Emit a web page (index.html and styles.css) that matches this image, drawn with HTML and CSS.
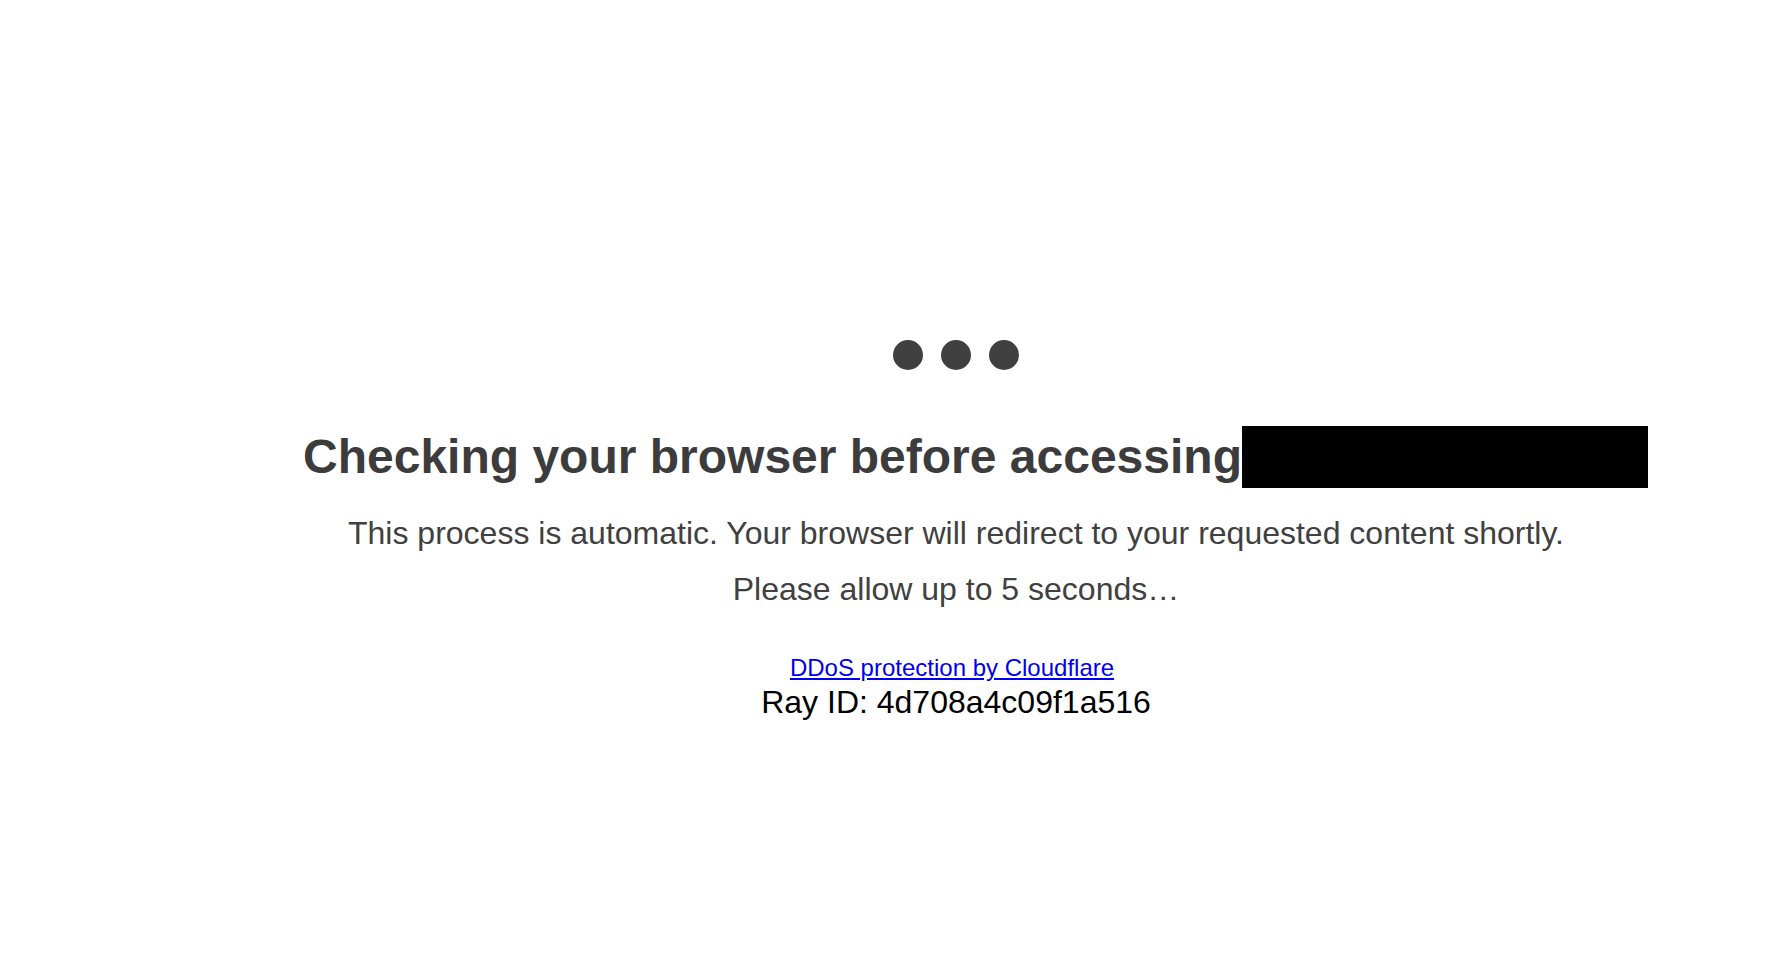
FILE: index.html
```html
<!DOCTYPE html>
<html lang="en">
<head>
  <meta charset="UTF-8" />
  <title>Just a moment...</title>
  <link rel="stylesheet" href="styles.css">
</head>
<body>
  <div class="wrapper">
    <div class="spinner">
      <span class="bubble"></span>
      <span class="bubble"></span>
      <span class="bubble"></span>
    </div>

    <h1 class="titulo">Checking your browser before accessing<span class="tapado"></span></h1>

    <p class="texto">This process is automatic. Your browser will redirect to your requested content shortly.</p>
    <p class="texto">Please allow up to 5 seconds&hellip;</p>

    <div class="attribution">
      <a href="#" class="link-cf">DDoS protection by Cloudflare</a>
      <div class="ray">Ray ID: 4d708a4c09f1a516</div>
    </div>
  </div>
</body>
</html>
```

FILE: styles.css
```css
html, body {
  margin: 0;
  padding: 0;
}

body {
  background-color: #fff;
  color: #000;
  font-family: "Liberation Sans", Arial, sans-serif;
}

.wrapper {
  display: flex;
  flex-direction: column;
  align-items: center;
  padding: 340px 0 0 132px;
  text-align: center;
}

.spinner {
  display: flex;
  gap: 18px;
  height: 30px;
}

.bubble {
  display: block;
  width: 30px;
  height: 30px;
  border-radius: 50%;
  background-color: #404040;
}

.titulo {
  margin: 56px 0 0 0;
  font-size: 48px;
  line-height: 62px;
  font-weight: 700;
  color: #3c3c3c;
  white-space: nowrap;
}

/* caja negra que tapa el dominio */
.tapado {
  display: inline-block;
  width: 406px;
  height: 62px;
  margin-right: -39px;
  vertical-align: top;
  background-color: #000;
}

.texto {
  margin: 0;
  font-size: 32px;
  line-height: 56px;
  color: #404040;
}

.titulo + .texto {
  margin-top: 17px;
}

.attribution {
  margin-top: 36px;
}

.link-cf {
  display: block;
  padding-right: 8px;
  font-size: 24px;
  line-height: 30px;
  color: #0000ee;
}

.ray {
  font-size: 32px;
  line-height: 38px;
  color: #000;
}
```
